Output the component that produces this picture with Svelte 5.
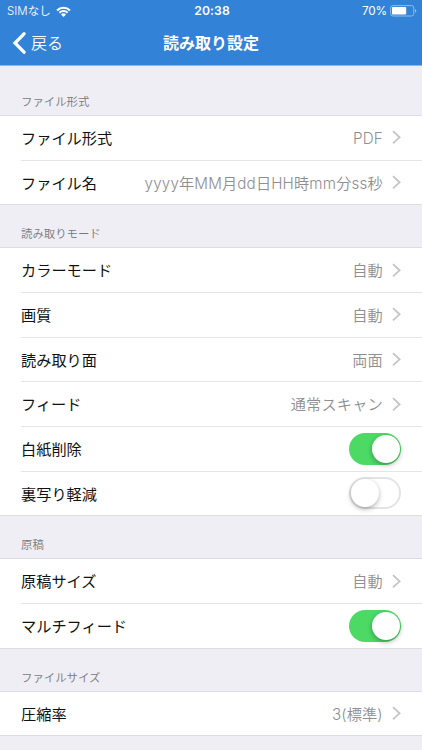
<script>
  const sections = [
    {
      title: 'ファイル形式',
      head: 49,
      rows: [
        { label: 'ファイル形式', value: 'PDF' },
        { label: 'ファイル名', value: 'yyyy年MM月dd日HH時mm分ss秒' }
      ]
    },
    {
      title: '読み取りモード',
      head: 42,
      rows: [
        { label: 'カラーモード', value: '自動' },
        { label: '画質', value: '自動' },
        { label: '読み取り面', value: '両面' },
        { label: 'フィード', value: '通常スキャン' },
        { label: '白紙削除', on: true },
        { label: '裏写り軽減', on: false }
      ]
    },
    {
      title: '原稿',
      head: 42,
      rows: [
        { label: '原稿サイズ', value: '自動' },
        { label: 'マルチフィード', on: true }
      ]
    },
    {
      title: 'ファイルサイズ',
      head: 42,
      rows: [{ label: '圧縮率', value: '3(標準)' }]
    }
  ];
</script>

<div class="screen">
  <header>
    <div class="status">
      <div class="carrier">
        <span>SIMなし</span>
        <svg width="15" height="11" viewBox="0 0 15 11" fill="#fff">
          <path d="M.3 3.7a10.3 10.3 0 0 1 14.4 0L13.2 5.2a8.1 8.1 0 0 0-11.4 0z" />
          <path d="M2.7 6.1a6.8 6.8 0 0 1 9.6 0l-1.4 1.4a4.8 4.8 0 0 0-6.8 0z" />
          <path d="M5 8.4a3.6 3.6 0 0 1 5 0l-2.5 2.5z" />
        </svg>
      </div>
      <div class="time">20:38</div>
      <div class="power">
        <span>70%</span>
        <svg width="27" height="12" viewBox="0 0 27 12">
          <rect x=".6" y=".6" width="23.2" height="10.4" rx="2.4" fill="none" stroke="#90bce9" />
          <rect x="2" y="2" width="14.2" height="7.6" rx=".8" fill="#fff" />
          <path d="M25 4v3.8c1.8-.6 1.8-3.2 0-3.8z" fill="#90bce9" />
        </svg>
      </div>
    </div>
    <nav>
      <div class="back">
        <svg width="14" height="22" viewBox="0 0 14 22">
          <path d="M12 1.8L3 11l9 9.2" fill="none" stroke="#fff" stroke-width="3.3" stroke-linecap="round" stroke-linejoin="miter" />
        </svg>
        <span>戻る</span>
      </div>
      <h1>読み取り設定</h1>
      <div></div>
    </nav>
  </header>

  {#each sections as section}
    <section>
      <h2 style:height="{section.head}px"><span>{section.title}</span></h2>
      <div class="group">
        {#each section.rows as row}
          <div class="row">
            <span class="label">{row.label}</span>
            {#if row.value}
              <span class="value">{row.value}</span>
              <svg class="chevron" width="9" height="15" viewBox="0 0 9 15">
                <path d="M1 1.2l6.6 6.1L1 13.4" fill="none" stroke="#c4c4c9" stroke-width="1.8" />
              </svg>
            {:else}
              <span class="switch" class:on={row.on}><i></i></span>
            {/if}
          </div>
        {/each}
      </div>
    </section>
  {/each}
</div>

<style>
  .screen {
    width: 422px;
    height: 750px;
    overflow: hidden;
    background: #efeef4;
    color: #111;
    font-family: Inter, 'Noto Sans CJK JP', sans-serif;
  }
  header {
    box-sizing: border-box;
    height: 66px;
    background: #3282d8;
    border-bottom: 1px solid #8db6e4;
    color: #fff;
  }
  .status {
    display: grid;
    grid-template-columns: 1fr auto 1fr;
    align-items: center;
    height: 22px;
    padding: 0 5px 0 7px;
    line-height: 22px;
  }
  .carrier, .power, .back {
    display: flex;
    align-items: center;
  }
  .carrier { gap: 5px; font-size: 11.5px; font-weight: 350; }
  .power { justify-content: flex-end; gap: 3px; font-size: 11.8px; letter-spacing: -0.2px; }
  .time { font-weight: 600; font-size: 12.2px; letter-spacing: 0.1px; }
  nav {
    display: grid;
    grid-template-columns: 1fr auto 1fr;
    align-items: center;
    height: 42px;
    padding: 0 12px;
  }
  .back { gap: 5px; font-size: 16px; line-height: 24px; font-weight: 350; }
  h1 { margin: 0; font-size: 16px; line-height: 24px; font-weight: 600; }
  h2 {
    box-sizing: border-box;
    display: flex;
    align-items: flex-end;
    margin: 0;
    padding: 0 21px 4px;
    font-size: 11.4px;
    line-height: 17px;
    font-weight: 350;
    color: #77777c;
  }
  .group {
    background: #fff;
    border-top: 1px solid #dddce2;
  }
  .row {
    box-sizing: border-box;
    display: flex;
    align-items: center;
    height: 44.67px;
    margin-left: 21px;
    padding-right: 21px;
    border-bottom: 1px solid #e5e5e8;
    font-size: 15.2px;
    line-height: 24px;
  }
  .row:last-child {
    margin-left: 0;
    padding-left: 21px;
    border-color: #dddce2;
  }
  .label { flex: 1; padding-top: 2.6px; }
  .value { padding-top: 2.6px; color: #8e8e93; font-weight: 350; letter-spacing: 0.15px; }
  .chevron { margin-left: 9.2px; }
  .switch {
    box-sizing: border-box;
    width: 52px;
    height: 32px;
    padding: 2px;
    border-radius: 16px;
    background: #fff;
    box-shadow: inset 0 0 0 2px #e4e4e6;
  }
  .switch i {
    display: block;
    width: 28px;
    height: 28px;
    border-radius: 50%;
    background: #fff;
    box-shadow: 0 2px 5px rgba(0, 0, 0, 0.3);
  }
  .switch.on { background: #4cd964; box-shadow: none; }
  .switch.on i { margin-left: 21px; }
</style>
